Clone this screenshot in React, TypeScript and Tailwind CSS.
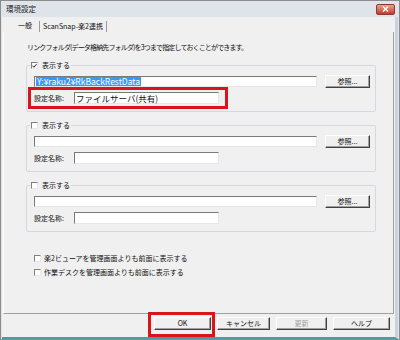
import React from "react";

const font = { fontFamily: '"Noto Sans CJK JP", "Noto Sans", sans-serif' };

function Check({ checked }: { checked?: boolean }) {
  return (
    <span className="w-[7px] h-[7px] border-t border-l border-[#808080] border-b border-r border-b-[#e8e8e8] border-r-[#e8e8e8] bg-white flex items-center justify-center shrink-0">
      {checked && (
        <svg width="6" height="6" viewBox="0 0 6 6">
          <path d="M0.5 2.5 L2.3 4.5 L5.5 0.8" stroke="#222" strokeWidth="1.2" fill="none" />
        </svg>
      )}
    </span>
  );
}

function Btn({ label, className = "", disabled = false }: { label: string; className?: string; disabled?: boolean }) {
  return (
    <div
      className={`h-[13px] flex items-center justify-center bg-[#f0f0f0] border border-t-white border-l-white border-b-[#404040] border-r-[#404040] shadow-[inset_-1px_-1px_0_#a0a0a0] text-[7px] leading-none ${
        disabled ? "text-[#a0a0a0]" : "text-[#111]"
      } ${className}`}
    >
      {label}
    </div>
  );
}

function Field({ className = "", children }: { className?: string; children?: React.ReactNode }) {
  return (
    <div
      className={`h-[11px] bg-white border-t border-l border-[#7a7a7a] border-b border-r border-b-[#e6e6e6] border-r-[#e6e6e6] flex items-center px-[1px] leading-none ${className}`}
    >
      {children}
    </div>
  );
}

function Group({ checked, path, name, highlight }: { checked?: boolean; path?: string; name?: string; highlight?: boolean }) {
  return (
    <div className="relative w-[350px] h-[47px] border border-[#d5d9de] rounded-[2px] pl-[7px] pt-[9px]">
      <div className="absolute left-[3px] top-[-5px] bg-[#f0f0f0] px-[1px] flex items-center gap-[4px] text-[7px] leading-[9px]">
        <Check checked={checked} />
        <span>表示する</span>
      </div>
      <div className="flex items-center gap-[8px]">
        <Field className="w-[283px]">
          {path && <span className="bg-[#3399ff] text-white text-[8.5px] px-[1px] h-[9px] flex items-center">{path}</span>}
        </Field>
        <Btn label="参照..." className="w-[45px]" />
      </div>
      <div className="relative mt-[4px] flex items-center gap-[6px]">
        <span className="w-[34px] text-[7px] leading-none">設定名称:</span>
        <Field className="w-[145px] h-[12px] text-[8.5px]">{name}</Field>
        {highlight && (
          <div className="absolute left-[-6px] top-[-5px] w-[200px] h-[22px] border-[3px] border-[#d8151b]" />
        )}
      </div>
    </div>
  );
}

export default function App() {
  return (
    <div className="w-[400px] h-[340px] bg-[#dfe4ea] border border-[#8c8c8c] flex flex-col overflow-hidden text-[#111]" style={font}>
      <div className="h-[16px] flex items-center justify-between pl-[5px] pr-[4px] shrink-0">
        <span className="text-[7.5px] leading-none text-[#222]">環境設定</span>
        <div className="w-[19px] h-[11px] rounded-[2px] bg-gradient-to-b from-[#e8a08c] to-[#c0392b] border border-[#8a3a30] flex items-center justify-center">
          <svg width="7" height="6" viewBox="0 0 7 6">
            <path d="M1 0.5 L6 5.5 M6 0.5 L1 5.5" stroke="white" strokeWidth="1.4" />
          </svg>
        </div>
      </div>
      <div className="flex-1 mx-[1px] bg-[#f0f0f0] border-b-[2px] border-b-[#4a9aa8] border-r-[3px] border-r-[#c8d4dc] flex flex-col">
        <div className="h-[15px] flex items-end pl-[12px] shrink-0 text-[7px] leading-none">
          <div className="w-[22px] h-[14px] flex items-center justify-center">一般</div>
          <div className="ml-[3px] h-[11px] border-l border-r border-[#9a9a9a] px-[3px] flex items-center">ScanSnap-楽2連携</div>
        </div>
        <div className="h-[282px] ml-[1px] mr-[1px] border-l border-l-white border-r border-r-[#a0a0a0] border-b border-b-[#a0a0a0] pl-[22px] pt-[11px] flex flex-col shrink-0">
          <p className="text-[7px] leading-[8px] ml-[1px] tracking-[-0.85px]">リンクフォルダ(データ格納先フォルダ)を3つまで指定しておくことができます。</p>
          <div className="mt-[14px] flex flex-col gap-[13px]">
            <Group checked path="Y:¥raku2¥RkBackRestData" name="ファイルサーバ(共有)" highlight />
            <Group />
            <Group />
          </div>
          <div className="mt-[22px] ml-[8px] flex flex-col gap-[6px] text-[7px] leading-[8px]">
            <div className="flex items-center gap-[3px]">
              <Check />
              <span>楽2ビューアを管理画面よりも前面に表示する</span>
            </div>
            <div className="flex items-center gap-[3px]">
              <Check />
              <span>作業デスクを管理画面よりも前面に表示する</span>
            </div>
          </div>
        </div>
        <div className="relative flex items-center pl-[152px] gap-[6px] mt-[3px]">
          <div className="relative">
            <Btn label="OK" className="w-[57px]" />
            <div className="absolute left-[-6px] top-[-5px] w-[67px] h-[25px] border-[3px] border-[#d8151b]" />
          </div>
          <Btn label="キャンセル" className="w-[53px]" />
          <Btn label="更新" className="w-[51px]" disabled />
          <Btn label="ヘルプ" className="w-[57px]" />
        </div>
      </div>
    </div>
  );
}
